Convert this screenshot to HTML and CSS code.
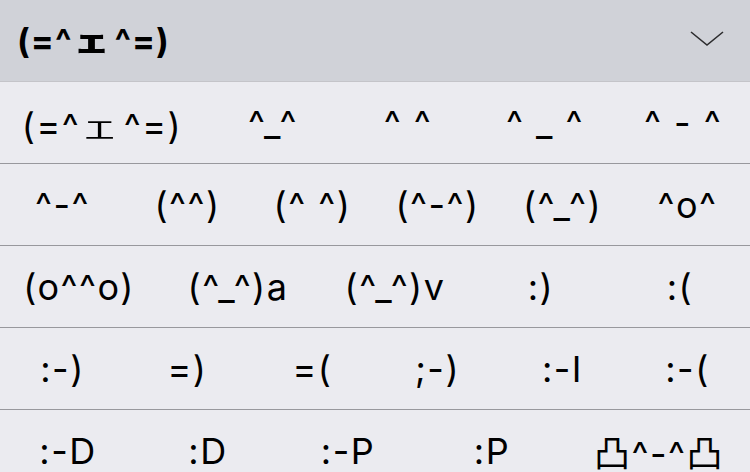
FILE: index.html
```html
<!DOCTYPE html>
<html lang="en">
<head>
  <meta charset="UTF-8" />
  <meta name="viewport" content="width=device-width, initial-scale=1">
  <title>Kaomoji</title>
  <link rel="stylesheet" href="styles.css">
</head>
<body>

  <header class="picker-head">
    <span class="picker-current">(=^<span class="ke">ｪ</span>^=)</span>
    <svg class="chevron" width="34" height="18" viewBox="0 0 34 18">
      <polyline points="1,2 17,15 33,2" fill="none" stroke="#2c2c2e" stroke-width="1.6" />
    </svg>
  </header>

  <div class="row row-1">
    <span class="cell">(=^<span class="ke">ｪ</span>^=)</span>
    <span class="cell">^_^</span>
    <span class="cell">^ ^</span>
    <span class="cell">^ _ ^</span>
    <span class="cell">^ - ^</span>
  </div>
  <div class="row row-even">
    <span class="cell">^-^</span>
    <span class="cell">(^^)</span>
    <span class="cell">(^ ^)</span>
    <span class="cell">(^-^)</span>
    <span class="cell">(^_^)</span>
    <span class="cell">^o^</span>
  </div>
  <div class="row row-3">
    <span class="cell">(o^^o)</span>
    <span class="cell">(^_^)a</span>
    <span class="cell">(^_^)v</span>
    <span class="cell">:)</span>
    <span class="cell">:(</span>
  </div>
  <div class="row row-even">
    <span class="cell">:-)</span>
    <span class="cell">=)</span>
    <span class="cell">=(</span>
    <span class="cell">;-)</span>
    <span class="cell">:-I</span>
    <span class="cell">:-(</span>
  </div>
  <div class="row row-5">
    <span class="cell">:-D</span>
    <span class="cell">:D</span>
    <span class="cell">:-P</span>
    <span class="cell">:P</span>
    <span class="cell">凸^-^凸</span>
  </div>

</body>
</html>
```

FILE: styles.css
```css
html, body {
  margin: 0;
  height: 100%;
  overflow: hidden;
}
body {
  font-family: Inter, "Noto Sans CJK JP", sans-serif;
  background: #ebebf0;
  color: #000;
}
.picker-head {
  height: 81px;
  border-bottom: 1px solid #c4c4c9;
  background: #d0d2d8;
  display: flex;
  align-items: center;
  justify-content: space-between;
  padding: 0 26px 0 17px;
}
.picker-current {
  font-size: 34px;
  font-weight: 700;
  letter-spacing: 1px;
  margin-top: -4px;
}
.chevron {
  display: block;
  margin-top: -4px;
}
.row {
  display: grid;
  height: 81px;
  border-bottom: 1px solid #98989d;
  align-items: center;
}
.row-1 {
  grid-template-columns: 204fr 138fr 132fr 142fr 134fr;
}
.row-even {
  grid-template-columns: repeat(6, 1fr);
}
.row-3 {
  grid-template-columns: 158fr 160fr 154fr 138fr 140fr;
}
.row-5 {
  grid-template-columns: 136fr 144fr 136fr 152fr 182fr;
}
.cell {
  font-size: 36px;
  letter-spacing: 1.5px;
  text-align: center;
  white-space: pre;
}
.ke {
  display: inline-block;
  transform: scaleX(2.2);
  margin: 0 12px;
}
.cell .ke {
  font-weight: 300;
}
```
